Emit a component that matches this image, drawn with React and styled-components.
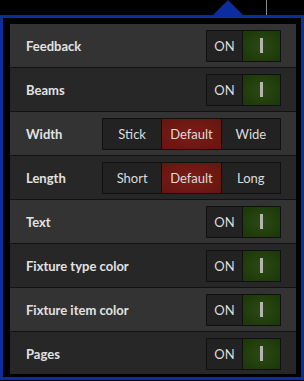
import React from 'react';
import styled, { createGlobalStyle } from 'styled-components';

const GlobalStyle = createGlobalStyle`
  html, body {
    margin: 0;
    padding: 0;
    background: #000;
  }
  body {
    font-family: Lato, "Open Sans", "Liberation Sans", sans-serif;
    -webkit-font-smoothing: antialiased;
  }
`;

const BLUE = '#0c2d9e';

const TopStrip = styled.div`
  display: flex;
  align-items: flex-end;
  height: 15px;
`;
const Caret = styled.div`
  margin-left: 213px;
  width: 0;
  height: 0;
  border-left: 15px solid transparent;
  border-right: 15px solid transparent;
  border-bottom: 15px solid ${BLUE};
`;
const Divider = styled.div`
  margin-left: 23px;
  width: 1px;
  height: 15px;
  background: #8a8a8a;
`;

const Frame = styled.div`
  box-sizing: border-box;
  width: 304px;
  height: 365px;
  border: 3px solid ${BLUE};
  padding: 6px 5px 3px 7px;
  background: #000;
`;
const Panel = styled.div`
  height: 350px;
  overflow: hidden;
  background: #2a2a2a;
`;
const Row = styled.div`
  box-sizing: border-box;
  height: 44px;
  display: flex;
  align-items: center;
  justify-content: space-between;
  padding: 0 15px 0 16px;
  background: ${(p) => (p.$alt ? '#272727' : '#333333')};
  border-bottom: 1px solid #121212;
`;
const Label = styled.span`
  font-size: 13px;
  font-weight: 700;
  color: #e2e2e2;
`;

const Toggle = styled.div`
  box-sizing: border-box;
  display: flex;
  width: 75px;
  height: 32px;
  border: 1px solid #101010;
`;
const ToggleText = styled.div`
  width: 35px;
  display: flex;
  align-items: center;
  justify-content: center;
  background: #222;
  color: #dcdcdc;
  font-size: 13px;
  border-right: 1px solid #101010;
`;
const ToggleKnob = styled.div`
  flex: 1;
  display: flex;
  align-items: center;
  justify-content: center;
  background: radial-gradient(ellipse at center, #2a4a12 0%, #1c3608 100%);

  &:after {
    content: '';
    width: 3px;
    height: 15px;
    background: #b4b4b4;
  }
`;

const Segmented = styled.div`
  box-sizing: border-box;
  display: flex;
  width: 179px;
  height: 32px;
  border: 1px solid #101010;
`;
const Segment = styled.div`
  flex: 1;
  display: flex;
  align-items: center;
  justify-content: center;
  font-size: 13px;
  color: #dcdcdc;
  background: ${(p) =>
    p.$active ? 'radial-gradient(ellipse at center, #7c1c18 0%, #65160f 100%)' : '#222'};

  & + & {
    border-left: 1px solid #101010;
  }
`;

const OnOff = () => (
  <Toggle>
    <ToggleText>ON</ToggleText>
    <ToggleKnob />
  </Toggle>
);

const Choice = ({ options, value }) => (
  <Segmented>
    {options.map((o) => (
      <Segment key={o} $active={o === value}>
        {o}
      </Segment>
    ))}
  </Segmented>
);

const rows = [
  { label: 'Feedback' },
  { label: 'Beams' },
  { label: 'Width', options: ['Stick', 'Default', 'Wide'], value: 'Default' },
  { label: 'Length', options: ['Short', 'Default', 'Long'], value: 'Default' },
  { label: 'Text' },
  { label: 'Fixture type color' },
  { label: 'Fixture item color' },
  { label: 'Pages' },
];

const App = () => (
  <>
    <GlobalStyle />
    <TopStrip>
      <Caret />
      <Divider />
    </TopStrip>
    <Frame>
      <Panel>
        {rows.map((r, i) => (
          <Row key={r.label} $alt={i % 2 === 1}>
            <Label>{r.label}</Label>
            {r.options ? <Choice options={r.options} value={r.value} /> : <OnOff />}
          </Row>
        ))}
      </Panel>
    </Frame>
  </>
);

export default App;
